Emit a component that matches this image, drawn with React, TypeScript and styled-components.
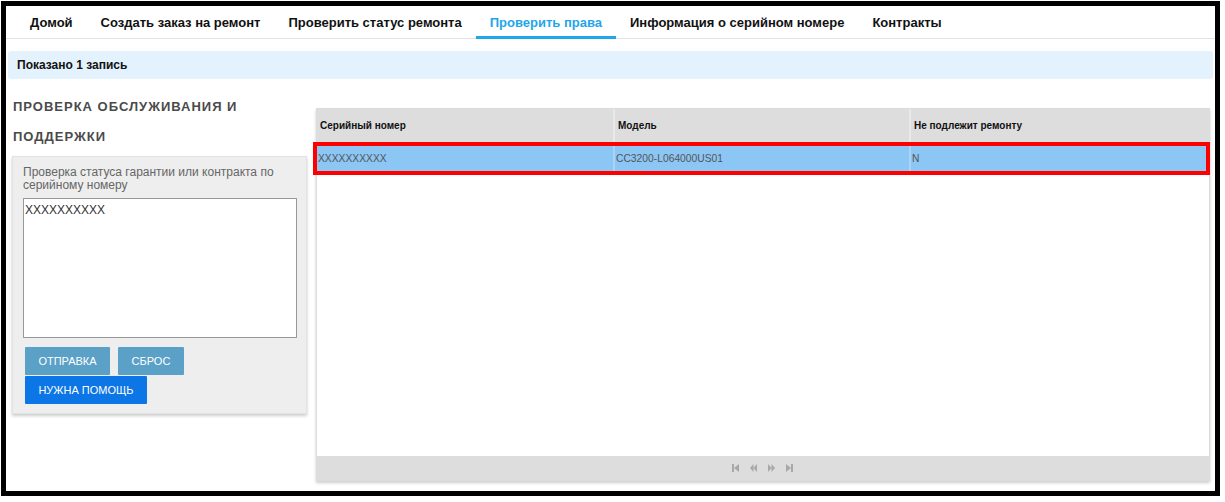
import * as React from 'react'
import styled, { createGlobalStyle } from 'styled-components'

const GlobalStyle = createGlobalStyle`
  html, body {
    margin: 0;
    padding: 0;
    background: #fff;
    font-family: "Liberation Sans", Arial, sans-serif;
  }
`

const Frame = styled.div`
  box-sizing: border-box;
  margin: 1px 0 0 1px;
  width: 1219px;
  height: 495px;
  border: 5px solid #000;
  display: flex;
  flex-direction: column;
  background: #fff;
`

const Nav = styled.nav`
  display: flex;
  height: 32px;
  padding-left: 10px;
  border-bottom: 1px solid #e2e2e2;
`

const Tab = styled.div<{ $active?: boolean }>`
  display: flex;
  align-items: center;
  padding: 0 14px;
  font-size: 13px;
  font-weight: bold;
  color: ${({ $active }) => ($active ? '#22a6ea' : '#111')};
  border-bottom: 3px solid ${({ $active }) => ($active ? '#22a6ea' : 'transparent')};
  margin-bottom: -1px;
  padding-top: 2px;
`

const InfoBar = styled.div`
  margin: 12px 2px 0 2px;
  height: 28px;
  display: flex;
  align-items: center;
  padding-left: 9px;
  background: #e3f2fd;
  border-radius: 3px;
  font-size: 12px;
  font-weight: bold;
  color: #111;
`

const Main = styled.div`
  display: flex;
  align-items: flex-start;
  gap: 9px;
  margin-top: 13px;
  padding-left: 6px;
`

const LeftCol = styled.div`
  width: 295px;
  display: flex;
  flex-direction: column;
`

const Heading = styled.h2`
  margin: 0 0 4px 1px;
  font-size: 13px;
  line-height: 30px;
  font-weight: bold;
  letter-spacing: 1px;
  color: #4a4a4a;
  text-transform: uppercase;
`

const Panel = styled.div`
  box-sizing: border-box;
  height: 258px;
  padding: 9px 10px 0 10px;
  background: #eeeeee;
  border: 1px solid #e2e2e2;
  box-shadow: 0 2px 3px rgba(0, 0, 0, 0.2);
`

const Label = styled.div`
  font-size: 12px;
  line-height: 13px;
  color: #666;
  margin-bottom: 6px;
`

const SerialInput = styled.textarea`
  box-sizing: border-box;
  display: block;
  width: 274px;
  height: 140px;
  margin: 0;
  padding: 4px 1px;
  border: 1px solid #999;
  background: #fff;
  resize: none;
  font-family: "Liberation Sans", Arial, sans-serif;
  font-size: 12px;
  color: #333;
`

const Buttons = styled.div`
  display: flex;
  flex-wrap: wrap;
  gap: 1px 8px;
  width: 200px;
  margin: 9px 0 0 2px;
`

const Button = styled.button<{ $primary?: boolean; $w: number }>`
  width: ${({ $w }) => $w}px;
  height: 28px;
  border: none;
  border-radius: 1px;
  padding: 0;
  font-family: "Liberation Sans", Arial, sans-serif;
  font-size: 11px;
  color: #fff;
  text-transform: uppercase;
  background: ${({ $primary }) => ($primary ? '#0c76e6' : '#5ba0c7')};
`

const Grid = styled.div`
  box-sizing: border-box;
  margin-top: 16px;
  width: 894px;
  height: 373px;
  display: flex;
  flex-direction: column;
  border: 1px solid #dcdcdc;
  box-shadow: 0 2px 3px rgba(0, 0, 0, 0.2);
  background: #fff;
`

const Row = styled.div<{ $header?: boolean; $selected?: boolean }>`
  display: grid;
  grid-template-columns: 296px 296px 1fr;
  height: ${({ $header }) => ($header ? '33px' : '25px')};
  background: ${({ $header, $selected }) => ($header ? '#dddddd' : $selected ? '#8cc6f5' : '#fff')};
  ${({ $selected }) =>
    $selected &&
    `
    margin: 4px 3px 0 0;
    outline: 4px solid #ff0000;
  `}
`

const Cell = styled.div<{ $header?: boolean }>`
  display: flex;
  align-items: center;
  padding-left: ${({ $header }) => ($header ? '3px' : '1px')};
  border-left: 2px solid ${({ $header }) => ($header ? '#e9e9e9' : '#a9d4f7')};
  font-size: ${({ $header }) => ($header ? '10px' : '10.3px')};
  font-weight: ${({ $header }) => ($header ? 'bold' : 'normal')};
  color: ${({ $header }) => ($header ? '#111' : '#555')};
  &:first-child {
    border-left: none;
  }
`

const Body = styled.div`
  flex: 1;
`

const Pager = styled.div`
  height: 24px;
  display: flex;
  align-items: center;
  justify-content: center;
  gap: 11px;
  background: #dddddd;
  padding-right: 2px;
`

const PagerIcon = ({ kind }: { kind: 'first' | 'prev' | 'next' | 'last' }) => {
  const fill = '#a8a8a8'
  return (
    <svg width="7" height="8" viewBox="0 0 7 8">
      {kind === 'first' && (
        <>
          <rect x="0" y="0" width="2" height="8" fill={fill} />
          <polygon points="7,0 2,4 7,8" fill={fill} />
        </>
      )}
      {kind === 'prev' && (
        <>
          <polygon points="3.5,0 0,4 3.5,8" fill={fill} />
          <polygon points="7,0 3.5,4 7,8" fill={fill} />
        </>
      )}
      {kind === 'next' && (
        <>
          <polygon points="0,0 3.5,4 0,8" fill={fill} />
          <polygon points="3.5,0 7,4 3.5,8" fill={fill} />
        </>
      )}
      {kind === 'last' && (
        <>
          <polygon points="0,0 5,4 0,8" fill={fill} />
          <rect x="5" y="0" width="2" height="8" fill={fill} />
        </>
      )}
    </svg>
  )
}

const tabs = [
  'Домой',
  'Создать заказ на ремонт',
  'Проверить статус ремонта',
  'Проверить права',
  'Информация о серийном номере',
  'Контракты',
]

const App: React.FC = () => {
  return (
    <>
      <GlobalStyle />
      <Frame>
        <Nav>
          {tabs.map((t) => (
            <Tab key={t} $active={t === 'Проверить права'}>
              {t}
            </Tab>
          ))}
        </Nav>

        <InfoBar>Показано 1 запись</InfoBar>

        <Main>
          <LeftCol>
            <Heading>
              Проверка обслуживания и
              <br />
              поддержки
            </Heading>
            <Panel>
              <Label>Проверка статуса гарантии или контракта по серийному номеру</Label>
              <SerialInput defaultValue="XXXXXXXXXX" />
              <Buttons>
                <Button $w={85}>Отправка</Button>
                <Button $w={66}>Сброс</Button>
                <Button $w={122} $primary>
                  Нужна помощь
                </Button>
              </Buttons>
            </Panel>
          </LeftCol>

          <Grid>
            <Row $header>
              <Cell $header>Серийный номер</Cell>
              <Cell $header>Модель</Cell>
              <Cell $header>Не подлежит ремонту</Cell>
            </Row>
            <Body>
              <Row $selected>
                <Cell>XXXXXXXXXX</Cell>
                <Cell>CC3200-L064000US01</Cell>
                <Cell>N</Cell>
              </Row>
            </Body>
            <Pager>
              <PagerIcon kind="first" />
              <PagerIcon kind="prev" />
              <PagerIcon kind="next" />
              <PagerIcon kind="last" />
            </Pager>
          </Grid>
        </Main>
      </Frame>
    </>
  )
}

export default App
